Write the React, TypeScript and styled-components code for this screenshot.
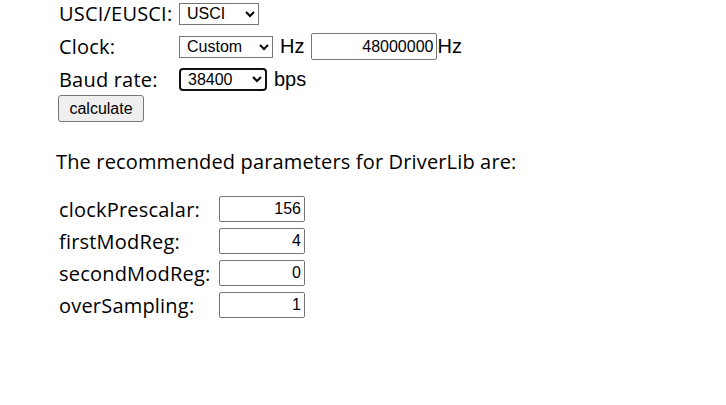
import React from "react";
import styled, { createGlobalStyle } from "styled-components";

const Global = createGlobalStyle`
  html, body { margin: 0; padding: 0; background: #fff; }
  body { font-family: "Open Sans", "Noto Sans", sans-serif; color: #000; }
`;

const Page = styled.div`
  width: 726px;
  height: 405px;
  padding-left: 59px;
  box-sizing: border-box;
  overflow: hidden;
`;

const Settings = styled.div`
  display: flex;
  flex-direction: column;
`;

const Row = styled.div<{ $h: number }>`
  display: flex;
  align-items: center;
  height: ${(p) => p.$h}px;
`;

const Label = styled.span<{ $w: number }>`
  font-family: "Open Sans", "Noto Sans", sans-serif;
  font-size: 20px;
  letter-spacing: 0.2px;
  width: ${(p) => p.$w}px;
  white-space: nowrap;
  flex: none;
`;

const Unit = styled.span<{ $gap?: boolean }>`
  font-family: "Liberation Sans", Arial, sans-serif;
  font-size: 20px;
  margin: ${(p) => (p.$gap ? "0 7px" : "0")};
`;

const Select = styled.select<{ $w: number; $focus?: boolean }>`
  font-family: "Liberation Sans", Arial, sans-serif;
  font-size: 16px;
  width: ${(p) => p.$w}px;
  height: ${(p) => (p.$focus ? 23 : 22)}px;
  box-sizing: border-box;
  border: ${(p) => (p.$focus ? "2px solid #101010" : "1px solid #767676")};
  border-radius: ${(p) => (p.$focus ? "4px" : "0")};
  background: #fff;
  color: #000;
  padding: 0 0 0 3px;
  margin: 0;
`;

const TextBox = styled.input<{ $w: number; $h: number }>`
  font-family: "Liberation Sans", Arial, sans-serif;
  font-size: 16px;
  width: ${(p) => p.$w}px;
  height: ${(p) => p.$h}px;
  box-sizing: border-box;
  border: 1px solid #767676;
  border-radius: 2px;
  text-align: right;
  padding: 0 3px;
  margin: 0;
  color: #000;
  background: #fff;
`;

const Button = styled.button`
  font-family: "Liberation Sans", Arial, sans-serif;
  font-size: 16px;
  width: 86px;
  height: 27px;
  box-sizing: border-box;
  border: 1px solid #767676;
  border-radius: 3px;
  background: #efefef;
  color: #000;
  padding: 0;
  margin: 2px 0 0 -1px;
`;

const Intro = styled.p`
  font-family: "Open Sans", "Noto Sans", sans-serif;
  font-size: 20px;
  letter-spacing: 0.15px;
  margin: 26px 0 0 -3px;
  line-height: 28px;
`;

const Results = styled.div`
  display: flex;
  flex-direction: column;
  margin-top: 17px;
`;

const ResultRow = styled.div`
  display: flex;
  align-items: center;
  height: 32px;
`;

export default function App() {
  const results: [string, string][] = [
    ["clockPrescalar:", "156"],
    ["firstModReg:", "4"],
    ["secondModReg:", "0"],
    ["overSampling:", "1"],
  ];
  return (
    <>
      <Global />
      <Page>
        <Settings>
          <Row $h={27}>
            <Label $w={120}>USCI/EUSCI:</Label>
            <Select $w={80} defaultValue="USCI">
              <option>USCI</option>
              <option>EUSCI</option>
            </Select>
          </Row>
          <Row $h={39}>
            <Label $w={120}>Clock:</Label>
            <Select $w={94} defaultValue="Custom">
              <option>Custom</option>
            </Select>
            <Unit $gap>Hz</Unit>
            <TextBox $w={126} $h={27} defaultValue="48000000" />
            <Unit>Hz</Unit>
          </Row>
          <Row $h={27}>
            <Label $w={120}>Baud rate:</Label>
            <Select $w={88} $focus defaultValue="38400">
              <option>38400</option>
            </Select>
            <Unit $gap>bps</Unit>
          </Row>
        </Settings>
        <Button>calculate</Button>
        <Intro>The recommended parameters for DriverLib are:</Intro>
        <Results>
          {results.map(([k, v]) => (
            <ResultRow key={k}>
              <Label $w={160}>{k}</Label>
              <TextBox $w={86} $h={26} defaultValue={v} readOnly />
            </ResultRow>
          ))}
        </Results>
      </Page>
    </>
  );
}
